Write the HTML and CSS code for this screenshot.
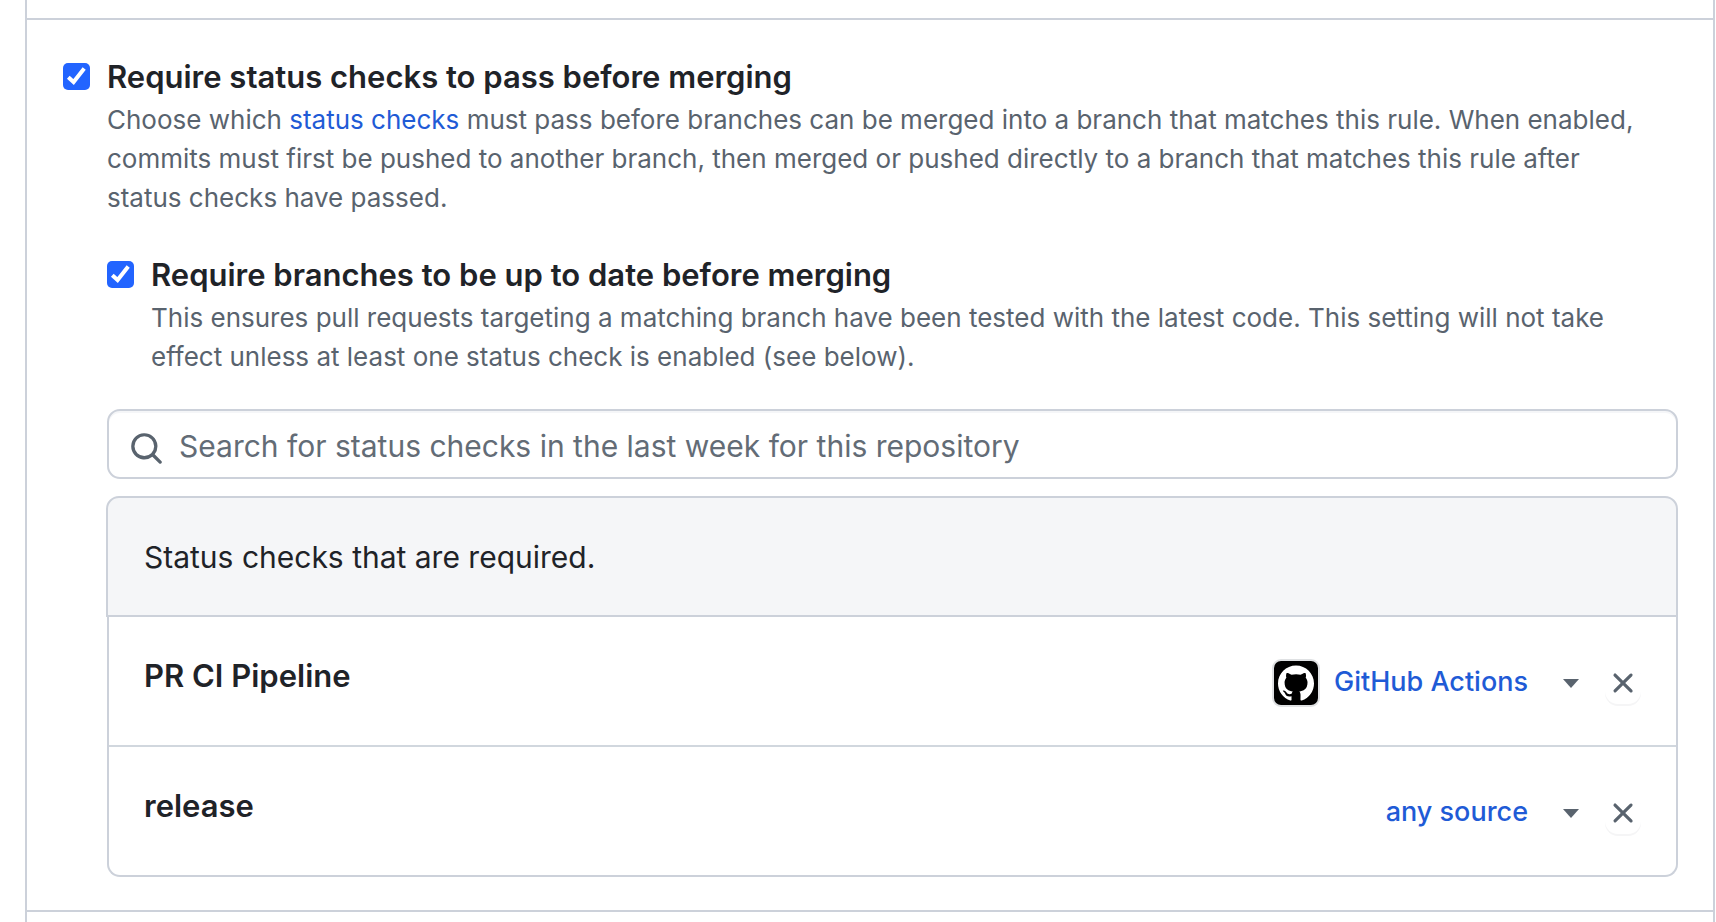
FILE: index.html
```html
<!DOCTYPE html>
<html lang="en">
<head>
<meta charset="utf-8">
<meta name="viewport" content="width=device-width, initial-scale=1">
<title>Branch protection rule</title>
<link rel="stylesheet" href="styles.css">
</head>
<body>
<main class="settings">
  <section class="rule">
    <div class="option">
      <input class="option-check" type="checkbox" id="require-checks" checked>
      <div class="option-body">
        <label class="option-title" for="require-checks">Require status checks to pass before merging</label>
        <p class="option-note">Choose which <a class="link" href="#status-checks">status checks</a> must pass before branches can be merged into a branch that matches this rule. When enabled, commits must first be pushed to another branch, then merged or pushed directly to a branch that matches this rule after status checks have passed.</p>
      </div>
    </div>
    <div class="nested">
      <div class="option">
        <input class="option-check" type="checkbox" id="require-current" checked>
        <div class="option-body">
          <label class="option-title" for="require-current">Require branches to be up to date before merging</label>
          <p class="option-note">This ensures pull requests targeting a matching branch have been tested with the latest code. This setting will not take effect unless at least one status check is enabled (see below).</p>
        </div>
      </div>
      <div class="search">
        <svg class="search-icon" viewBox="0 0 16 16" aria-hidden="true"><path d="M10.68 11.74a6 6 0 0 1-7.922-8.982 6 6 0 0 1 8.982 7.922l3.04 3.04a.749.749 0 0 1-.326 1.275.749.749 0 0 1-.734-.215ZM11.5 7a4.499 4.499 0 1 0-8.997 0A4.499 4.499 0 0 0 11.5 7Z"/></svg>
        <input class="search-input" type="text" aria-label="Search for status checks" placeholder="Search for status checks in the last week for this repository">
      </div>
      <div class="checks" id="status-checks">
        <div class="checks-header">Status checks that are required.</div>
        <ul class="checks-list">
          <li class="check">
            <strong class="check-name">PR CI Pipeline</strong>
            <div class="check-actions">
              <button class="source" type="button">
                <svg class="avatar" viewBox="0 0 44 44" aria-hidden="true"><rect width="44" height="44" fill="#000"/><g transform="translate(4 4.5) scale(2.25)"><path fill="#fff" d="M8 0c4.42 0 8 3.58 8 8a8.013 8.013 0 0 1-5.45 7.59c-.4.08-.55-.17-.55-.38 0-.27.01-1.13.01-2.2 0-.75-.25-1.23-.54-1.48 1.78-.2 3.65-.88 3.65-3.95 0-.88-.31-1.59-.82-2.15.08-.2.36-1.02-.08-2.12 0 0-.67-.22-2.2.82-.64-.18-1.32-.27-2-.27-.68 0-1.36.09-2 .27-1.53-1.03-2.2-.82-2.2-.82-.44 1.1-.16 1.92-.08 2.12-.51.56-.82 1.28-.82 2.15 0 3.06 1.86 3.75 3.64 3.95-.23.2-.44.55-.51 1.07-.46.21-1.61.55-2.33-.66-.15-.24-.6-.83-1.23-.82-.67.01-.27.38.01.53.34.19.73.9.82 1.13.16.45.68 1.31 2.69.94 0 .67.01 1.3.01 1.49 0 .21-.15.45-.55.38A7.995 7.995 0 0 1 0 8c0-4.42 3.58-8 8-8Z"/></g></svg>
                <span class="source-name">GitHub Actions</span>
                <span class="caret"></span>
              </button>
              <button class="remove" type="button" aria-label="Remove PR CI Pipeline">
                <svg class="remove-icon" viewBox="0 0 16 16" aria-hidden="true"><path d="M3.72 3.72a.75.75 0 0 1 1.06 0L8 6.94l3.22-3.22a.749.749 0 0 1 1.275.326.749.749 0 0 1-.215.734L9.06 8l3.22 3.22a.749.749 0 0 1-.326 1.275.749.749 0 0 1-.734-.215L8 9.06l-3.22 3.22a.751.751 0 0 1-1.042-.018.751.751 0 0 1-.018-1.042L6.94 8 3.72 4.78a.75.75 0 0 1 0-1.06Z"/></svg>
              </button>
            </div>
          </li>
          <li class="check">
            <strong class="check-name">release</strong>
            <div class="check-actions">
              <button class="source" type="button">
                <span class="source-name">any source</span>
                <span class="caret"></span>
              </button>
              <button class="remove" type="button" aria-label="Remove release">
                <svg class="remove-icon" viewBox="0 0 16 16" aria-hidden="true"><path d="M3.72 3.72a.75.75 0 0 1 1.06 0L8 6.94l3.22-3.22a.749.749 0 0 1 1.275.326.749.749 0 0 1-.215.734L9.06 8l3.22 3.22a.749.749 0 0 1-.326 1.275.749.749 0 0 1-.734-.215L8 9.06l-3.22 3.22a.751.751 0 0 1-1.042-.018.751.751 0 0 1-.018-1.042L6.94 8 3.72 4.78a.75.75 0 0 1 0-1.06Z"/></svg>
              </button>
            </div>
          </li>
        </ul>
      </div>
    </div>
  </section>
</main>
</body>
</html>
```
FILE: styles.css
```css
* {
  box-sizing: border-box;
}

body {
  margin: 0;
  background: #fff;
  color: #1f2328;
  font-family: Inter, "Liberation Sans", sans-serif;
  font-size: 30px;
  line-height: 44px;
}

.settings {
  min-height: 100vh;
  margin: 0 1px 0 25px;
  padding-top: 18px;
  border: solid #ccd1da;
  border-width: 0 2px;
}

.rule {
  padding: 35px 35px 33px 36px;
  border: solid #ccd1da;
  border-width: 2px 0;
}

.option {
  display: flex;
  align-items: flex-start;
  gap: 17px;
}

.option-check {
  flex: none;
  appearance: none;
  width: 27px;
  height: 27px;
  margin: 8px 0 0;
  border-radius: 5px;
  background: #fff;
  border: 2px solid #858f99;
}

.option-check:checked {
  border: 0;
  background: #2264ff url("data:image/svg+xml,%3Csvg xmlns='http://www.w3.org/2000/svg' viewBox='0 0 27 27'%3E%3Cpath d='M5.3 14.2L10.6 19L21.2 5.6' fill='none' stroke='%23fff' stroke-width='4'/%3E%3C/svg%3E") center / 100% no-repeat;
}

.option-body {
  flex: 1;
  min-width: 0;
}

.option-title {
  display: block;
  font-size: 31px;
  font-weight: 600;
}

.option-note {
  margin: 1px 0 0;
  padding-right: 24px;
  color: #59636e;
  font-size: 26px;
  line-height: 39px;
}

.link {
  color: #1f5bd6;
  text-decoration: none;
}

.nested {
  margin: 36px 0 0 44px;
}

.search {
  display: flex;
  align-items: center;
  gap: 15px;
  height: 70px;
  margin-top: 33px;
  padding: 0 20px;
  border: 2px solid #ccd1da;
  border-radius: 13px;
  box-shadow: inset 0 2px 0 #f5f6f8;
}

.search-icon {
  flex: none;
  width: 35px;
  height: 35px;
  margin-top: 8px;
  fill: #59636e;
}

.search-input {
  flex: 1;
  min-width: 0;
  padding: 3px 0 0;
  border: 0;
  outline: 0;
  background: none;
  color: inherit;
  font: inherit;
}

.search-input::placeholder {
  color: #636c76;
  opacity: 1;
}

.checks {
  margin-top: 17px;
}

.checks-header {
  margin-left: -1px;
  padding: 37px 36px 36px;
  border: 2px solid #ccd1da;
  border-radius: 13px 13px 0 0;
  background: #f5f6f8;
}

.checks-list {
  margin: 0;
  padding: 0;
  list-style: none;
  border: 2px solid #ccd1da;
  border-top: 0;
  border-radius: 0 0 13px 13px;
}

.check {
  display: flex;
  justify-content: space-between;
  align-items: flex-start;
  padding: 37px 35px 33px;
}

.check + .check {
  border-top: 2px solid #d1d7de;
}

.check-name {
  font-size: 31px;
  font-weight: 600;
}

.check-actions {
  display: flex;
  align-items: center;
  gap: 26px;
  height: 58px;
}

.source {
  display: flex;
  align-items: center;
  padding: 0;
  border: 0;
  background: none;
  color: #1f5bd6;
  font: 500 27px/39px Inter, "Liberation Sans", sans-serif;
  cursor: pointer;
}

.avatar {
  width: 44px;
  height: 44px;
  margin-right: 16px;
  border-radius: 7px;
  box-shadow: 0 0 0 2px #dfe1e3;
}

.source-name {
  padding-bottom: 4px;
}

.caret {
  margin-left: 35px;
  border: 8px solid transparent;
  border-top: 9px solid #59636e;
  border-bottom: 0;
}

.remove {
  display: flex;
  align-items: center;
  justify-content: center;
  width: 36px;
  height: 42px;
  padding: 0;
  border: 0;
  border-radius: 13px;
  background: none;
  box-shadow: 0 2px 0 #f5f5f6;
  cursor: pointer;
}

.remove-icon {
  flex: none;
  width: 34px;
  height: 34px;
  fill: #59636e;
}
```
